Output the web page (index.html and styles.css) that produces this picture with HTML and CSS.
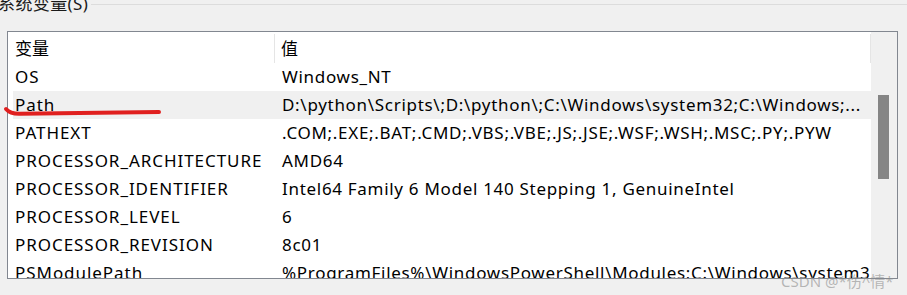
FILE: index.html
```html
<!DOCTYPE html>
<html lang="zh-CN">
<head>
    <meta charset="UTF-8">
    <title>系统变量</title>
    <link rel="stylesheet" href="styles.css">
</head>
<body>
    <div class="group-title">
        <span class="title-text">系统变量(S)</span>
        <span class="title-rule"></span>
    </div>

    <div class="listbox">
        <div class="list">
            <div class="list-head">
                <div class="cell name">变量</div>
                <div class="cell value">值</div>
            </div>

            <div class="row"><div class="cell name">OS</div><div class="cell value">Windows_NT</div></div>
            <div class="row selected"><div class="cell name">Path</div><div class="cell value">D:\python\Scripts\;D:\python\;C:\Windows\system32;C:\Windows;...</div></div>
            <div class="row"><div class="cell name">PATHEXT</div><div class="cell value">.COM;.EXE;.BAT;.CMD;.VBS;.VBE;.JS;.JSE;.WSF;.WSH;.MSC;.PY;.PYW</div></div>
            <div class="row"><div class="cell name">PROCESSOR_ARCHITECTURE</div><div class="cell value">AMD64</div></div>
            <div class="row"><div class="cell name">PROCESSOR_IDENTIFIER</div><div class="cell value">Intel64 Family 6 Model 140 Stepping 1, GenuineIntel</div></div>
            <div class="row"><div class="cell name">PROCESSOR_LEVEL</div><div class="cell value">6</div></div>
            <div class="row"><div class="cell name">PROCESSOR_REVISION</div><div class="cell value">8c01</div></div>
            <div class="row"><div class="cell name">PSModulePath</div><div class="cell value">%ProgramFiles%\WindowsPowerShell\Modules;C:\Windows\system32\WindowsPowerShell\v1.0\Modules</div></div>
        </div>

        <div class="scrollbar">
            <div class="thumb"></div>
        </div>
    </div>

    <!-- hand-drawn red underline -->
    <svg class="underline" width="170" height="16" viewBox="0 0 170 16">
        <path d="M3 3 C6 6.5 10 8 17 7.8 L156 6" fill="none" stroke="#e0201f" stroke-width="4" stroke-linecap="round"/>
    </svg>

    <div class="watermark">CSDN @*伤^情*</div>
</body>
</html>
```

FILE: styles.css
```css
html, body {
    height: 100%;
}

body {
    margin: 0;
    background-color: #f0f0f0;
    color: #000;
    font-family: "Noto Sans", "Noto Sans CJK SC", sans-serif;
    font-size: 17px;
    overflow: hidden;
    position: relative;
}

.group-title {
    display: flex;
    align-items: center;
    height: 20px;
    margin-top: -6px;
    margin-left: -2px;
}

.title-text {
    line-height: 20px;
    color: #1a1a1a;
    letter-spacing: 0.4px;
}

.title-rule {
    flex: 1;
    border-top: 1px solid #dcdcdc;
    margin-left: 3px;
}

.listbox {
    display: flex;
    box-sizing: border-box;
    width: 891px;
    height: 248px;
    margin: 17px 0 0 7px;
    border: 1px solid #828790;
    background-color: #fff;
    overflow: hidden;
}

.list {
    flex: 1;
    overflow: hidden;
    letter-spacing: 0.95px;
}

.list-head,
.row {
    display: grid;
    grid-template-columns: 261px 1fr;
    margin-left: 5px;
    white-space: nowrap;
}

.list-head {
    height: 31px;
    align-items: center;
    letter-spacing: 0;
}

.list-head .cell {
    line-height: 29px;
    margin-top: 1px;
}

.list-head .value {
    border-left: 1px solid #e5e5e5;
    border-right: 1px solid #e5e5e5;
    padding-left: 6px;
}

.row {
    height: 28px;
    line-height: 28px;
}

.row.selected {
    background-color: #f0f0f0;
}

.cell {
    overflow: hidden;
}

.cell.name {
    padding-left: 2px;
}

.row .cell.value {
    padding-left: 8px;
    letter-spacing: 0.7px;
}

.scrollbar {
    width: 26px;
    background-color: #f0f0f0;
}

.thumb {
    width: 11px;
    height: 84px;
    margin: 63px 0 0 7px;
    background-color: #858585;
}

.underline {
    position: absolute;
    left: 3px;
    top: 106px;
}

.watermark {
    position: absolute;
    left: 781px;
    top: 270px;
    font-size: 15px;
    color: rgba(140, 140, 140, 0.6);
    white-space: nowrap;
}
```
